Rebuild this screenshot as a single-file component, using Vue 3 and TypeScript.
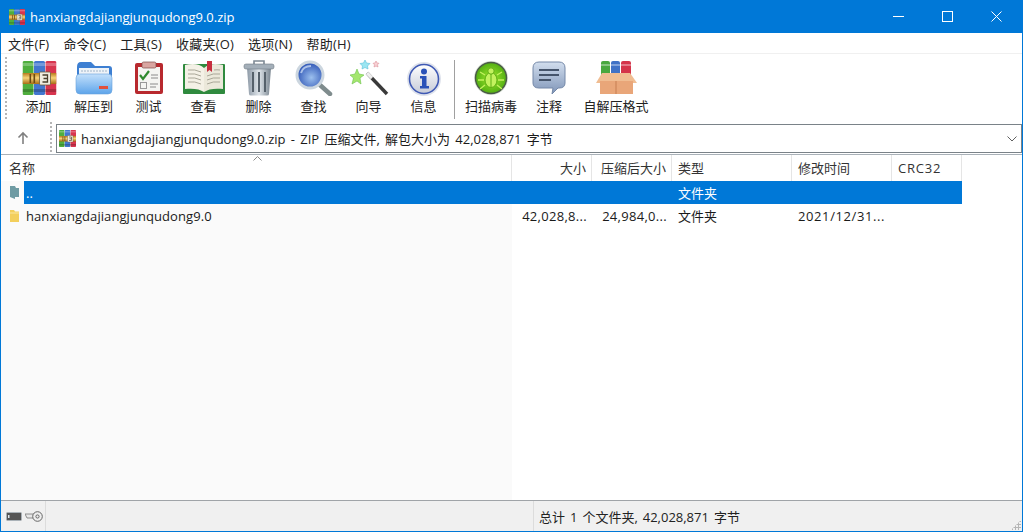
<template>
  <div class="window">
    <svg class="defs" width="0" height="0" aria-hidden="true">
      <defs>
        <linearGradient id="g-belt" x1="0" y1="0" x2="0" y2="1">
          <stop offset="0" stop-color="#b77a1c" />
          <stop offset=".45" stop-color="#f7d47a" />
          <stop offset="1" stop-color="#a96c14" />
        </linearGradient>
        <symbol id="rar" viewBox="0 0 34 34">
          <rect x="0" y="0" width="11" height="34" rx="1.500" fill="#4fae3e" />
          <rect x="11.500" y="0" width="11" height="34" rx="1.500" fill="#4377cf" />
          <rect x="23" y="0" width="11" height="34" rx="1.500" fill="#d8354f" />
          <rect x="0" y="2" width="34" height="3" fill="#fff" opacity=".25" />
          <rect x="0" y="28" width="34" height="3" fill="#000" opacity=".2" />
          <rect x="0" y="12" width="34" height="11" fill="url(#g-belt)" />
          <rect x="17" y="11" width="11" height="13" rx="1" fill="#f1ece0" stroke="#6b5a3a" stroke-width=".8" />
          <path d="M20 14h5v7h-5M21 17.500h4" fill="none" stroke="#4a3f2c" stroke-width="1.300" />
          <rect x="7" y="13" width="1.600" height="9" fill="#6b4a12" />
          <rect x="11" y="13" width="1.600" height="9" fill="#6b4a12" />
        </symbol>
        <linearGradient id="g-folder" x1="0" y1="0" x2="0" y2="1">
          <stop offset="0" stop-color="#c3e0fb" />
          <stop offset="1" stop-color="#5da4ea" />
        </linearGradient>
        <linearGradient id="g-can" x1="0" y1="0" x2="1" y2="0">
          <stop offset="0" stop-color="#8d99a6" />
          <stop offset=".5" stop-color="#dfe5ea" />
          <stop offset="1" stop-color="#78848f" />
        </linearGradient>
        <radialGradient id="g-lens" cx=".55" cy=".6" r=".6">
          <stop offset="0" stop-color="#9cc0ee" />
          <stop offset="1" stop-color="#2b52b4" />
        </radialGradient>
        <radialGradient id="g-virus" cx=".5" cy=".5" r=".55">
          <stop offset="0" stop-color="#a2ea2e" />
          <stop offset="1" stop-color="#4aa80e" />
        </radialGradient>
        <linearGradient id="g-bubble" x1="0" y1="0" x2="0" y2="1">
          <stop offset="0" stop-color="#d2deee" />
          <stop offset="1" stop-color="#7f95b8" />
        </linearGradient>
        <linearGradient id="g-info" x1="0" y1="0" x2="0" y2="1">
          <stop offset="0" stop-color="#ffffff" />
          <stop offset="1" stop-color="#c6cbd8" />
        </linearGradient>
      </defs>
    </svg>

    <header class="titlebar">
      <svg class="title-icon" viewBox="0 0 34 34"><use href="#rar" /></svg>
      <span class="title-text">hanxiangdajiangjunqudong9.0.zip</span>
      <div class="controls">
        <button class="ctl" type="button" aria-label="最小化">
          <svg width="11" height="11" viewBox="0 0 11 11"><path d="M0 5.500h11" stroke="#fff" /></svg>
        </button>
        <button class="ctl" type="button" aria-label="最大化">
          <svg width="11" height="11" viewBox="0 0 11 11"><rect x=".5" y=".5" width="10" height="10" fill="none" stroke="#fff" /></svg>
        </button>
        <button class="ctl" type="button" aria-label="关闭">
          <svg width="11" height="11" viewBox="0 0 11 11"><path d="M.5.5l10 10M10.500.5l-10 10" stroke="#fff" /></svg>
        </button>
      </div>
    </header>

    <nav class="menubar">
      <span v-for="item in menus" :key="item" class="menu-item">{{ item }}</span>
    </nav>

    <div class="toolbar">
      <div class="grip"></div>
      <template v-for="tool in tools" :key="tool.icon">
        <div v-if="tool.sepBefore" class="tool-sep"></div>
        <button class="tool" type="button" :style="{ width: tool.width + 'px' }">
          <svg class="tool-icon" width="44" height="36" viewBox="0 0 44 36">
            <use v-if="tool.icon === 'add'" href="#rar" x="5.500" y="1" width="34" height="34" />

            <g v-else-if="tool.icon === 'extract'">
              <path d="M5 7q0-5 4-5h10l4 4h14q3 0 3 3v8H5z" fill="#3d7fd2" />
              <rect x="7" y="8" width="30" height="9" fill="#eef3f8" />
              <path d="M9 11h26" stroke="#9fb4c8" stroke-dasharray="2 1" />
              <rect x="4" y="14" width="36" height="20" rx="4" fill="url(#g-folder)" stroke="#6aa3dc" stroke-width=".6" />
              <rect x="27" y="26" width="9" height="3" fill="#e0503c" />
            </g>

            <g v-else-if="tool.icon === 'test'">
              <rect x="8" y="3" width="28" height="31" rx="2" fill="#b8292e" />
              <rect x="11" y="7" width="22" height="24" fill="#f5f5f2" />
              <rect x="15" y="2" width="14" height="6" rx="1.500" fill="#d9a5a0" stroke="#7b4a48" stroke-width=".7" />
              <path d="M13 15l3 4 6-8" fill="none" stroke="#2f8a2e" stroke-width="2.200" />
              <path d="M24 15h7M24 18h7M23 24h8M23 27h6" stroke="#8b8b8b" />
              <rect x="13.500" y="22.500" width="6" height="6" fill="none" stroke="#999" />
            </g>

            <g v-else-if="tool.icon === 'view'">
              <rect x="1" y="4" width="42" height="30" rx="1" fill="#2f8a3e" />
              <path d="M3 5c8-2 15-1 19 3v24c-4-3-11-4-19-3z" fill="#f4f1e6" />
              <path d="M41 5c-8-2-15-1-19 3v24c4-3 11-4 19-3z" fill="#ebe8da" />
              <path d="M6 10q7-1 13 2M6 14q7-1 13 2M6 18q7-1 13 2M6 22q7-1 13 2M38 10q-3-.4-6 0M38 14q-7-1-13 2M38 18q-7-1-13 2M38 22q-7-1-13 2" fill="none" stroke="#a9a798" />
              <path d="M25 1h5v11l-2.500-2-2.500 2z" fill="#c62f3f" />
            </g>

            <g v-else-if="tool.icon === 'delete'">
              <path d="M17 4V1h10v3" fill="none" stroke="#7d8994" stroke-width="1.600" />
              <path d="M10 8l2 26q0 1.500 2 1.500h16q2 0 2-1.500l2-26z" fill="url(#g-can)" />
              <path d="M16 12v20M22 12v20M28 12v20" stroke="#56616b" stroke-width="2" />
              <rect x="7" y="4" width="30" height="5" rx="2" fill="#a4afb9" stroke="#6f7a85" stroke-width=".6" />
            </g>

            <g v-else-if="tool.icon === 'find'">
              <path d="M28 25l10 9" stroke="#7f8c8d" stroke-width="4.500" stroke-linecap="round" />
              <circle cx="18" cy="15" r="13" fill="url(#g-lens)" stroke="#ccd6df" stroke-width="3" />
              <path d="M9 13q2-7 10-7" fill="none" stroke="#d7e6fa" stroke-width="2" opacity=".7" />
            </g>

            <g v-else-if="tool.icon === 'wizard'">
              <path d="M20 13l20 21" stroke="#3a3a3a" stroke-width="3.400" />
              <path d="M20 13l5 5" stroke="#eee" stroke-width="3.400" />
              <polygon points="10,9 12,14 17,15 13,18 14,24 10,21 5,24 6.500,18 3,15 8,14" fill="#a4e66e" stroke="#6cc24a" stroke-width=".6" />
              <polygon points="18,0 19.500,3 23,3.500 20.500,6 21,9 18,7.500 15,9 15.500,6 13,3.500 16.500,3" fill="#9be6f2" stroke="#5cc0d8" stroke-width=".6" />
              <polygon points="29,1 30,3 32,3.300 30.500,4.800 31,7 29,6 27,7 27.500,4.800 26,3.300 28,3" fill="#f8d0d4" stroke="#dc929a" stroke-width=".6" />
            </g>

            <g v-else-if="tool.icon === 'info'">
              <circle cx="22" cy="19" r="17" fill="#dfe3ec" />
              <circle cx="22" cy="19" r="14.500" fill="url(#g-info)" stroke="#3f59b4" stroke-width="1.600" />
              <circle cx="22" cy="11.500" r="3" fill="#2a52b8" />
              <path d="M18 16h6.500v10H27v2.500h-9V26h2v-7.500h-2z" fill="#2a52b8" />
            </g>

            <g v-else-if="tool.icon === 'virus'">
              <circle cx="22" cy="18" r="17" fill="#d8e0d4" />
              <circle cx="22" cy="18" r="15.500" fill="url(#g-virus)" stroke="#4a5a48" stroke-width="1.400" />
              <ellipse cx="22" cy="20" rx="6" ry="7.500" fill="#c3f25e" stroke="#5fae14" />
              <circle cx="22" cy="11" r="3.200" fill="#c3f25e" stroke="#5fae14" />
              <path d="M16 15l-5-3M28 15l5-3M15 20H9M29 20h6M16 25l-5 4M28 25l5 4" stroke="#c3f25e" stroke-width="1.400" />
              <path d="M22 14v13" stroke="#5fae14" />
            </g>

            <g v-else-if="tool.icon === 'comment'">
              <path d="M12 2h20q6 0 6 6v15q0 5-6 5h-1l-6 6 1-6H12q-6 0-6-5V8q0-6 6-6z" fill="url(#g-bubble)" stroke="#7488a8" />
              <path d="M12 10h20M12 15h20M12 20h12" stroke="#45546b" stroke-width="1.800" />
            </g>

            <g v-else-if="tool.icon === 'sfx'">
              <rect x="7" y="1" width="9" height="16" rx="2" fill="#49a83f" />
              <rect x="17" y="1" width="9" height="16" rx="2" fill="#4172c6" />
              <rect x="27" y="1" width="10" height="16" rx="2" fill="#d4344a" />
              <rect x="7" y="4" width="30" height="2" fill="#fff" opacity=".35" />
              <path d="M8 13h28l7 10H2z" fill="#f0bd92" />
              <rect x="6" y="21" width="33" height="13" fill="#e9a679" />
              <path d="M22 21v13" stroke="#c77f52" />
            </g>
          </svg>
          <span class="tool-label">{{ tool.label }}</span>
        </button>
      </template>
    </div>

    <div class="addressbar">
      <svg class="up-arrow" width="12" height="13" viewBox="0 0 12 13">
        <path d="M6 13V2M1.500 6.500L6 2l4.500 4.500" fill="none" stroke="#808080" stroke-width="1.600" />
      </svg>
      <div class="grip grip-address"></div>
      <div class="address-box">
        <svg class="address-icon" viewBox="0 0 34 34"><use href="#rar" /></svg>
        <span class="address-text">hanxiangdajiangjunqudong9.0.zip - ZIP 压缩文件, 解包大小为 42,028,871 字节</span>
        <svg class="chevron" width="10" height="6" viewBox="0 0 10 6">
          <path d="M.5.500L5 5l4.500-4.500" fill="none" stroke="#606060" />
        </svg>
      </div>
    </div>

    <section class="list">
      <div class="list-head">
        <span v-for="col in columns" :key="col.label" class="head-cell" :class="{ right: col.right }">{{ col.label }}</span>
        <svg class="sort-caret" width="9" height="5" viewBox="0 0 9 5">
          <path d="M.5 4.500l4-4 4 4" fill="none" stroke="#8a8a8a" />
        </svg>
      </div>
      <div class="list-body">
        <div v-for="row in rows" :key="row.name" class="row" :class="{ selected: row.selected }">
          <div class="cell name">
            <svg class="row-icon" width="11" height="15" viewBox="0 0 11 15">
              <path v-if="row.selected" d="M1 1h5l1 2h3v9H6v2L1 12z" fill="#6f9ba3" />
              <path v-else d="M1 2h4l1 1.500h4V14H1z" fill="#f3cf5c" />
              <path v-if="!row.selected" d="M1 5h9" stroke="#fbe79f" />
            </svg>
            <span class="name-text">{{ row.name }}</span>
          </div>
          <div class="cell right">{{ row.size }}</div>
          <div class="cell right">{{ row.packed }}</div>
          <div class="cell">{{ row.type }}</div>
          <div class="cell date">{{ row.modified }}</div>
          <div class="cell"></div>
        </div>
      </div>
    </section>

    <footer class="statusbar">
      <div class="status-left">
        <svg width="16" height="9" viewBox="0 0 16 9">
          <rect x=".5" y=".5" width="15" height="8" rx="1" fill="#555" stroke="#aab2b8" />
          <rect x="2" y="3" width="1.500" height="3" fill="#dfe8ee" />
        </svg>
        <svg width="18" height="11" viewBox="0 0 18 11">
          <path d="M0 3h10v4H2z" fill="#e8e8e8" stroke="#777" stroke-width=".8" />
          <circle cx="12.500" cy="5.500" r="4.800" fill="#eee" stroke="#666" />
          <circle cx="12.500" cy="5.500" r="1.600" fill="none" stroke="#666" />
        </svg>
      </div>
      <div class="status-mid"></div>
      <div class="status-right">总计 1 个文件夹, 42,028,871 字节</div>
      <div class="size-grip"></div>
    </footer>
  </div>
</template>

<script setup lang="ts">
interface Tool {
  label: string;
  icon: string;
  width: number;
  sepBefore?: boolean;
}

interface Column {
  label: string;
  right?: boolean;
}

interface Row {
  name: string;
  size: string;
  packed: string;
  type: string;
  modified: string;
  selected?: boolean;
}

const menus = ['文件(F)', '命令(C)', '工具(S)', '收藏夹(O)', '选项(N)', '帮助(H)'];

const tools: Tool[] = [
  { label: '添加', icon: 'add', width: 55 },
  { label: '解压到', icon: 'extract', width: 55 },
  { label: '测试', icon: 'test', width: 55 },
  { label: '查看', icon: 'view', width: 55 },
  { label: '删除', icon: 'delete', width: 55 },
  { label: '查找', icon: 'find', width: 55 },
  { label: '向导', icon: 'wizard', width: 55 },
  { label: '信息', icon: 'info', width: 55 },
  { label: '扫描病毒', icon: 'virus', width: 70, sepBefore: true },
  { label: '注释', icon: 'comment', width: 46 },
  { label: '自解压格式', icon: 'sfx', width: 88 },
];

const columns: Column[] = [
  { label: '名称' },
  { label: '大小', right: true },
  { label: '压缩后大小', right: true },
  { label: '类型' },
  { label: '修改时间' },
  { label: 'CRC32' },
];

const rows: Row[] = [
  { name: '..', size: '', packed: '', type: '文件夹', modified: '', selected: true },
  { name: 'hanxiangdajiangjunqudong9.0', size: '42,028,8...', packed: '24,984,0...', type: '文件夹', modified: '2021/12/31...' },
];
</script>

<style>
html,
body {
  margin: 0;
  background: #fff;
}
</style>

<style scoped>
.window {
  width: 1023px;
  height: 532px;
  box-sizing: border-box;
  display: flex;
  flex-direction: column;
  border: 1px solid #0078d7;
  border-top: none;
  background: #fff;
  color: #1a1a1a;
  font-family: "Open Sans", "Noto Sans CJK SC", sans-serif;
  font-size: 13px;
  overflow: hidden;
}

.defs {
  position: absolute;
}

.titlebar {
  height: 33px;
  flex: none;
  display: flex;
  align-items: center;
  background: #0078d7;
  color: #fff;
  padding-left: 8px;
  margin: 0 -1px;
}

.title-icon {
  width: 16px;
  height: 16px;
  margin-left: 1px;
}

.title-text {
  margin-left: 5px;
  font-size: 13px;
}

.controls {
  margin-left: auto;
  display: flex;
  padding-right: 2px;
}

.ctl {
  width: 49px;
  height: 33px;
  border: none;
  background: none;
  padding: 0;
  display: flex;
  align-items: center;
  justify-content: center;
}

.menubar {
  height: 21px;
  flex: none;
  display: flex;
  align-items: center;
  border-bottom: 1px solid #f0f0f0;
  box-sizing: border-box;
}

.menu-item {
  padding: 0 7px;
  white-space: nowrap;
  color: #222;
  letter-spacing: .2px;
}

.toolbar {
  height: 68px;
  flex: none;
  display: flex;
  align-items: flex-start;
  box-sizing: border-box;
  padding-top: 6px;
}

.grip {
  width: 2px;
  align-self: stretch;
  margin: -3px 4px 2px 4px;
  background: repeating-linear-gradient(to bottom, #b5b5b5 0 2px, transparent 2px 4px);
}

.tool {
  flex: none;
  display: flex;
  flex-direction: column;
  align-items: center;
  border: none;
  background: none;
  padding: 0;
  font: inherit;
  color: #222;
}

.tool-icon {
  display: block;
}

.tool-label {
  margin-top: 1px;
  white-space: nowrap;
  line-height: 19px;
}

.tool-sep {
  width: 1px;
  height: 59px;
  margin: 0 1px -2px 3px;
  background: #a0a0a0;
  flex: none;
}

.addressbar {
  height: 33px;
  flex: none;
  display: flex;
  align-items: flex-start;
  box-sizing: border-box;
  padding-top: 2px;
  border-bottom: 1px solid #a9b1b8;
}

.up-arrow {
  flex: none;
  margin: 7px 0 0 16px;
}

.grip-address {
  margin: -2px 4px 1px 21px;
}

.address-box {
  flex: 1;
  height: 29px;
  box-sizing: border-box;
  display: flex;
  align-items: center;
  border: 1px solid #7a8288;
  padding: 0 4px 0 2px;
}

.address-icon {
  width: 17px;
  height: 17px;
  flex: none;
}

.address-text {
  margin-left: 5px;
  font-size: 13px;
  white-space: nowrap;
  word-spacing: 1.900px;
}

.chevron {
  margin-left: auto;
}

.list {
  flex: 1;
  display: flex;
  flex-direction: column;
  min-height: 0;
}

.list-head,
.row {
  display: grid;
  grid-template-columns: 511px 80px 80px 120px 100px 70px;
  width: 961px;
}

.list-head {
  position: relative;
  height: 26px;
  flex: none;
}

.head-cell {
  display: flex;
  align-items: center;
  padding: 0 6px 1px 8px;
  border-right: 1px solid #e5e5e5;
  white-space: nowrap;
  color: #333;
}

.head-cell:nth-child(6) {
  letter-spacing: .8px;
}

.head-cell.right {
  justify-content: flex-end;
  padding-right: 5px;
}

.head-cell:not(:first-child):not(.right) {
  padding-left: 6px;
}

.sort-caret {
  position: absolute;
  left: 252px;
  top: 1px;
}

.list-body {
  flex: 1;
  background: linear-gradient(to right, #fafafa 511px, #fff 511px);
}

.row {
  height: 23px;
  line-height: 23px;
}

.cell {
  padding: 1px 5px 0 6px;
  box-sizing: border-box;
  white-space: nowrap;
  overflow: hidden;
}

.cell.right {
  text-align: right;
  letter-spacing: .3px;
}

.cell.date {
  letter-spacing: .6px;
}

.cell.name {
  display: flex;
  align-items: center;
  padding: 0;
}

.row-icon {
  flex: none;
  margin: 0 4px 0 8px;
}

.name-text {
  flex: 1;
  padding: 1px 0 0 2px;
  align-self: stretch;
  letter-spacing: .07px;
}

.row.selected {
  color: #fff;
}

.row.selected .cell:not(.name),
.row.selected .name-text {
  background: #0078d7;
}

.statusbar {
  height: 31px;
  flex: none;
  display: flex;
  box-sizing: border-box;
  position: relative;
  background: #f0f0f0;
  border-top: 1px solid #a0a4a8;
  color: #222;
}

.status-left {
  width: 45px;
  flex: none;
  box-sizing: border-box;
  display: flex;
  align-items: center;
  gap: 3px;
  padding-left: 5px;
  border-right: 1px solid #dcdcdc;
}

.status-mid {
  width: 487px;
  flex: none;
  border-right: 1px solid #dcdcdc;
}

.status-right {
  padding-left: 5px;
  line-height: 33px;
  white-space: nowrap;
  word-spacing: 1.600px;
}

.size-grip {
  position: absolute;
  right: 1px;
  bottom: 1px;
  width: 10px;
  height: 10px;
  background: radial-gradient(circle, #b5b5b5 1px, transparent 1.200px) 0 0 / 3px 3px;
  clip-path: polygon(100% 0, 100% 100%, 0 100%);
}
</style>
